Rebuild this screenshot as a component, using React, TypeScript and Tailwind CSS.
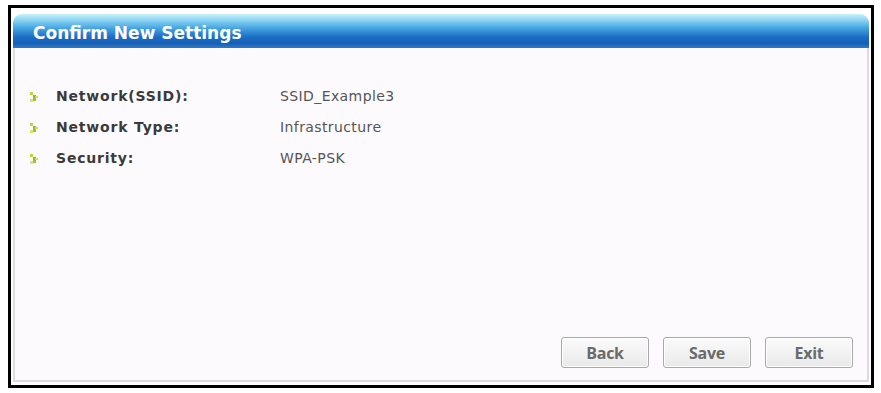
import React from "react";

const rows = [
  { label: "Network(SSID):", value: "SSID_Example3" },
  { label: "Network Type:", value: "Infrastructure" },
  { label: "Security:", value: "WPA-PSK" },
];

function Bullet() {
  return (
    <svg width="8" height="10" viewBox="0 0 8 10" className="shrink-0">
      <rect x="0" y="0" width="3" height="3" fill="#c4d23c" />
      <rect x="3" y="3" width="3" height="3" fill="#9cb22c" />
      <rect x="5" y="4" width="3" height="2" fill="#d2de56" />
      <rect x="3" y="6" width="3" height="3" fill="#a9bd34" />
      <rect x="0" y="7" width="3" height="3" fill="#dbe56e" />
    </svg>
  );
}

function Btn({ children }: { children: React.ReactNode }) {
  return (
    <button className="flex h-[31px] w-[88px] items-center justify-center rounded-[3px] border border-[#a9a9a9] bg-gradient-to-b from-[#fbfbfb] to-[#e9e9e9] font-['Open_Sans',sans-serif] text-[16px] font-bold tracking-[-0.3px] text-[#6a6a6a] shadow-[inset_0_0_0_1px_#ffffff]">
      {children}
    </button>
  );
}

export default function App() {
  return (
    <div className="h-[393px] w-[881px] bg-white pl-2 pt-[5px]">
      <div className="h-[383px] w-[866px] border-[3px] border-black bg-white pb-[3px] pl-[2px] pr-[2px] pt-[6px]">
        <div className="flex h-full flex-col">
          {/* Header */}
          <div className="flex h-[34px] items-center rounded-t-[9px] bg-[linear-gradient(to_bottom,#c8f0fb_0%,#92d8f4_16%,#45a4e3_42%,#1b6dc5_68%,#1560b6_86%,#3079c6_100%)] pl-[20px] pt-[5px]">
            <span className="font-['DejaVu_Sans',sans-serif] text-[17px] font-bold text-white">
              Confirm New Settings
            </span>
          </div>

          {/* Body */}
          <div className="flex flex-1 flex-col border-x-2 border-b-2 border-[#dedbde] bg-[#fdfafd]">
            <div className="flex flex-col pt-[33px]">
              {rows.map((r) => (
                <div key={r.label} className="flex h-[31px] items-center">
                  <div className="flex w-[265px] items-center gap-[18px] pl-[15px]">
                    <Bullet />
                    <span className="font-['DejaVu_Sans',sans-serif] text-[14px] font-bold tracking-[0.8px] text-[#3a3a3a]">
                      {r.label}
                    </span>
                  </div>
                  <span className="font-['DejaVu_Sans',sans-serif] text-[14px] tracking-[0.4px] text-[#555555]">
                    {r.value}
                  </span>
                </div>
              ))}
            </div>

            <div className="mt-auto flex justify-end gap-[14px] pb-[12px] pr-[14px]">
              <Btn>Back</Btn>
              <Btn>Save</Btn>
              <Btn>Exit</Btn>
            </div>
          </div>
        </div>
      </div>
    </div>
  );
}
